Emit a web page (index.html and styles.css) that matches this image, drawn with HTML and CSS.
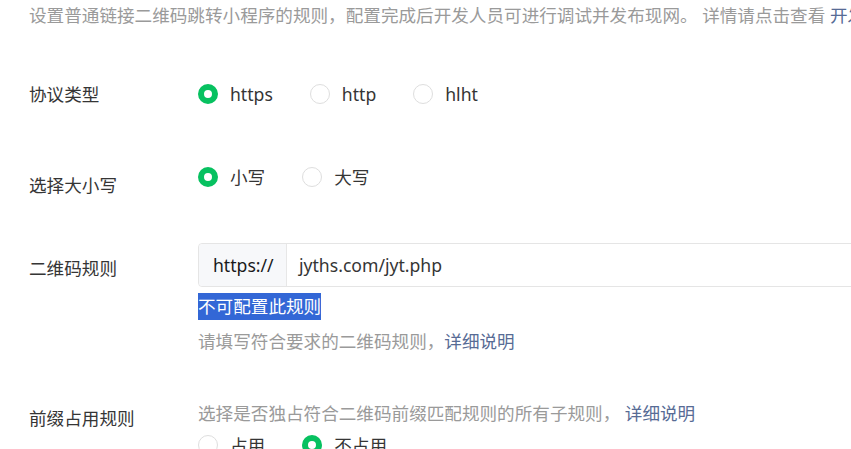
FILE: index.html
```html
<!DOCTYPE html>
<html lang="zh-CN">
<head>
    <meta charset="UTF-8">
    <meta name="viewport" content="width=device-width, initial-scale=1.0">
    <title>二维码规则配置</title>
    <link rel="stylesheet" href="styles.css">
</head>
<body>
    <div class="page">
        <p class="intro">设置普通链接二维码跳转小程序的规则，配置完成后开发人员可进行调试并发布现网。 详情请点击查看 <a class="link" href="#">开发文档</a></p>

        <div class="row row-protocol">
            <div class="label">协议类型</div>
            <div class="radios">
                <span class="radio checked"><i></i>https</span>
                <span class="radio"><i></i>http</span>
                <span class="radio"><i></i>hlht</span>
            </div>
        </div>

        <div class="row row-case">
            <div class="label">选择大小写</div>
            <div class="radios">
                <span class="radio checked"><i></i>小写</span>
                <span class="radio"><i></i>大写</span>
            </div>
        </div>

        <div class="row row-rule">
            <div class="label">二维码规则</div>
            <div class="control">
                <div class="input-group">
                    <span class="prefix">https://</span>
                    <span class="value">jyths.com/jyt.php</span>
                </div>
                <div class="notice"><span class="selected">不可配置此规则</span></div>
                <p class="hint">请填写符合要求的二维码规则，<a class="link" href="#">详细说明</a></p>
            </div>
        </div>

        <div class="row row-prefix">
            <div class="label">前缀占用规则</div>
            <div class="control">
                <p class="hint">选择是否独占符合二维码前缀匹配规则的所有子规则， <a class="link" href="#">详细说明</a></p>
                <div class="radios radios-sub">
                    <span class="radio"><i></i>占用</span>
                    <span class="radio checked"><i></i>不占用</span>
                </div>
            </div>
        </div>
    </div>
</body>
</html>
```

FILE: styles.css
```css
html, body {
    margin: 0;
    height: 100%;
    overflow: hidden;
    background: #fff;
}

body {
    font-family: "Noto Sans", "Noto Sans CJK SC", sans-serif;
    font-size: 17.6px;
    color: #353535;
}

p {
    margin: 0;
}

.page {
    padding-left: 29px;
}

.intro {
    padding-top: 2px;
    line-height: 26px;
    color: #9a9a9a;
    white-space: nowrap;
}

.link {
    color: #576b95;
    text-decoration: none;
}

.row {
    display: flex;
    align-items: flex-start;
}

.label {
    width: 169px;
    flex-shrink: 0;
    line-height: 26px;
    color: #353535;
}

.row-protocol {
    margin-top: 53px;
}

.row-protocol .label {
    padding-top: 0;
}

.row-case {
    margin-top: 57px;
}

.row-case .label {
    padding-top: 8px;
}

.row-rule {
    margin-top: 45px;
}

.row-rule .label {
    padding-top: 12px;
}

.row-prefix {
    margin-top: 46px;
}

.row-prefix .label {
    padding-top: 5px;
}

.radios {
    display: flex;
    line-height: 26px;
}

.radio {
    display: flex;
    align-items: center;
    margin-right: 37px;
    color: #353535;
}

.radio i {
    box-sizing: border-box;
    width: 20px;
    height: 20px;
    margin-right: 12px;
    border: 1px solid #dedede;
    border-radius: 50%;
    background: #fff;
}

.radio.checked i {
    border: 6.5px solid #07c160;
    background: #fff;
}

.control {
    flex: 1;
    min-width: 0;
}

.input-group {
    display: flex;
    width: 720px;
    height: 44px;
    box-sizing: border-box;
    border: 1px solid #e5e5e5;
    border-radius: 4px 0 0 4px;
}

.prefix {
    width: 88px;
    box-sizing: border-box;
    padding-left: 14px;
    line-height: 42px;
    color: #1a1a1a;
    background: #f7f8fa;
    border-right: 1px solid #e7e7e7;
    border-radius: 4px 0 0 4px;
}

.value {
    padding-left: 12px;
    line-height: 42px;
    color: #353535;
}

.notice {
    margin-top: 6px;
    line-height: 27px;
}

.selected {
    display: inline-block;
    background: #3367d6;
    color: #fff;
}

.hint {
    line-height: 26px;
    color: #9a9a9a;
}

.row-rule .hint {
    margin-top: 8px;
}

.radios-sub {
    margin-top: 5px;
    line-height: 28px;
}
```
